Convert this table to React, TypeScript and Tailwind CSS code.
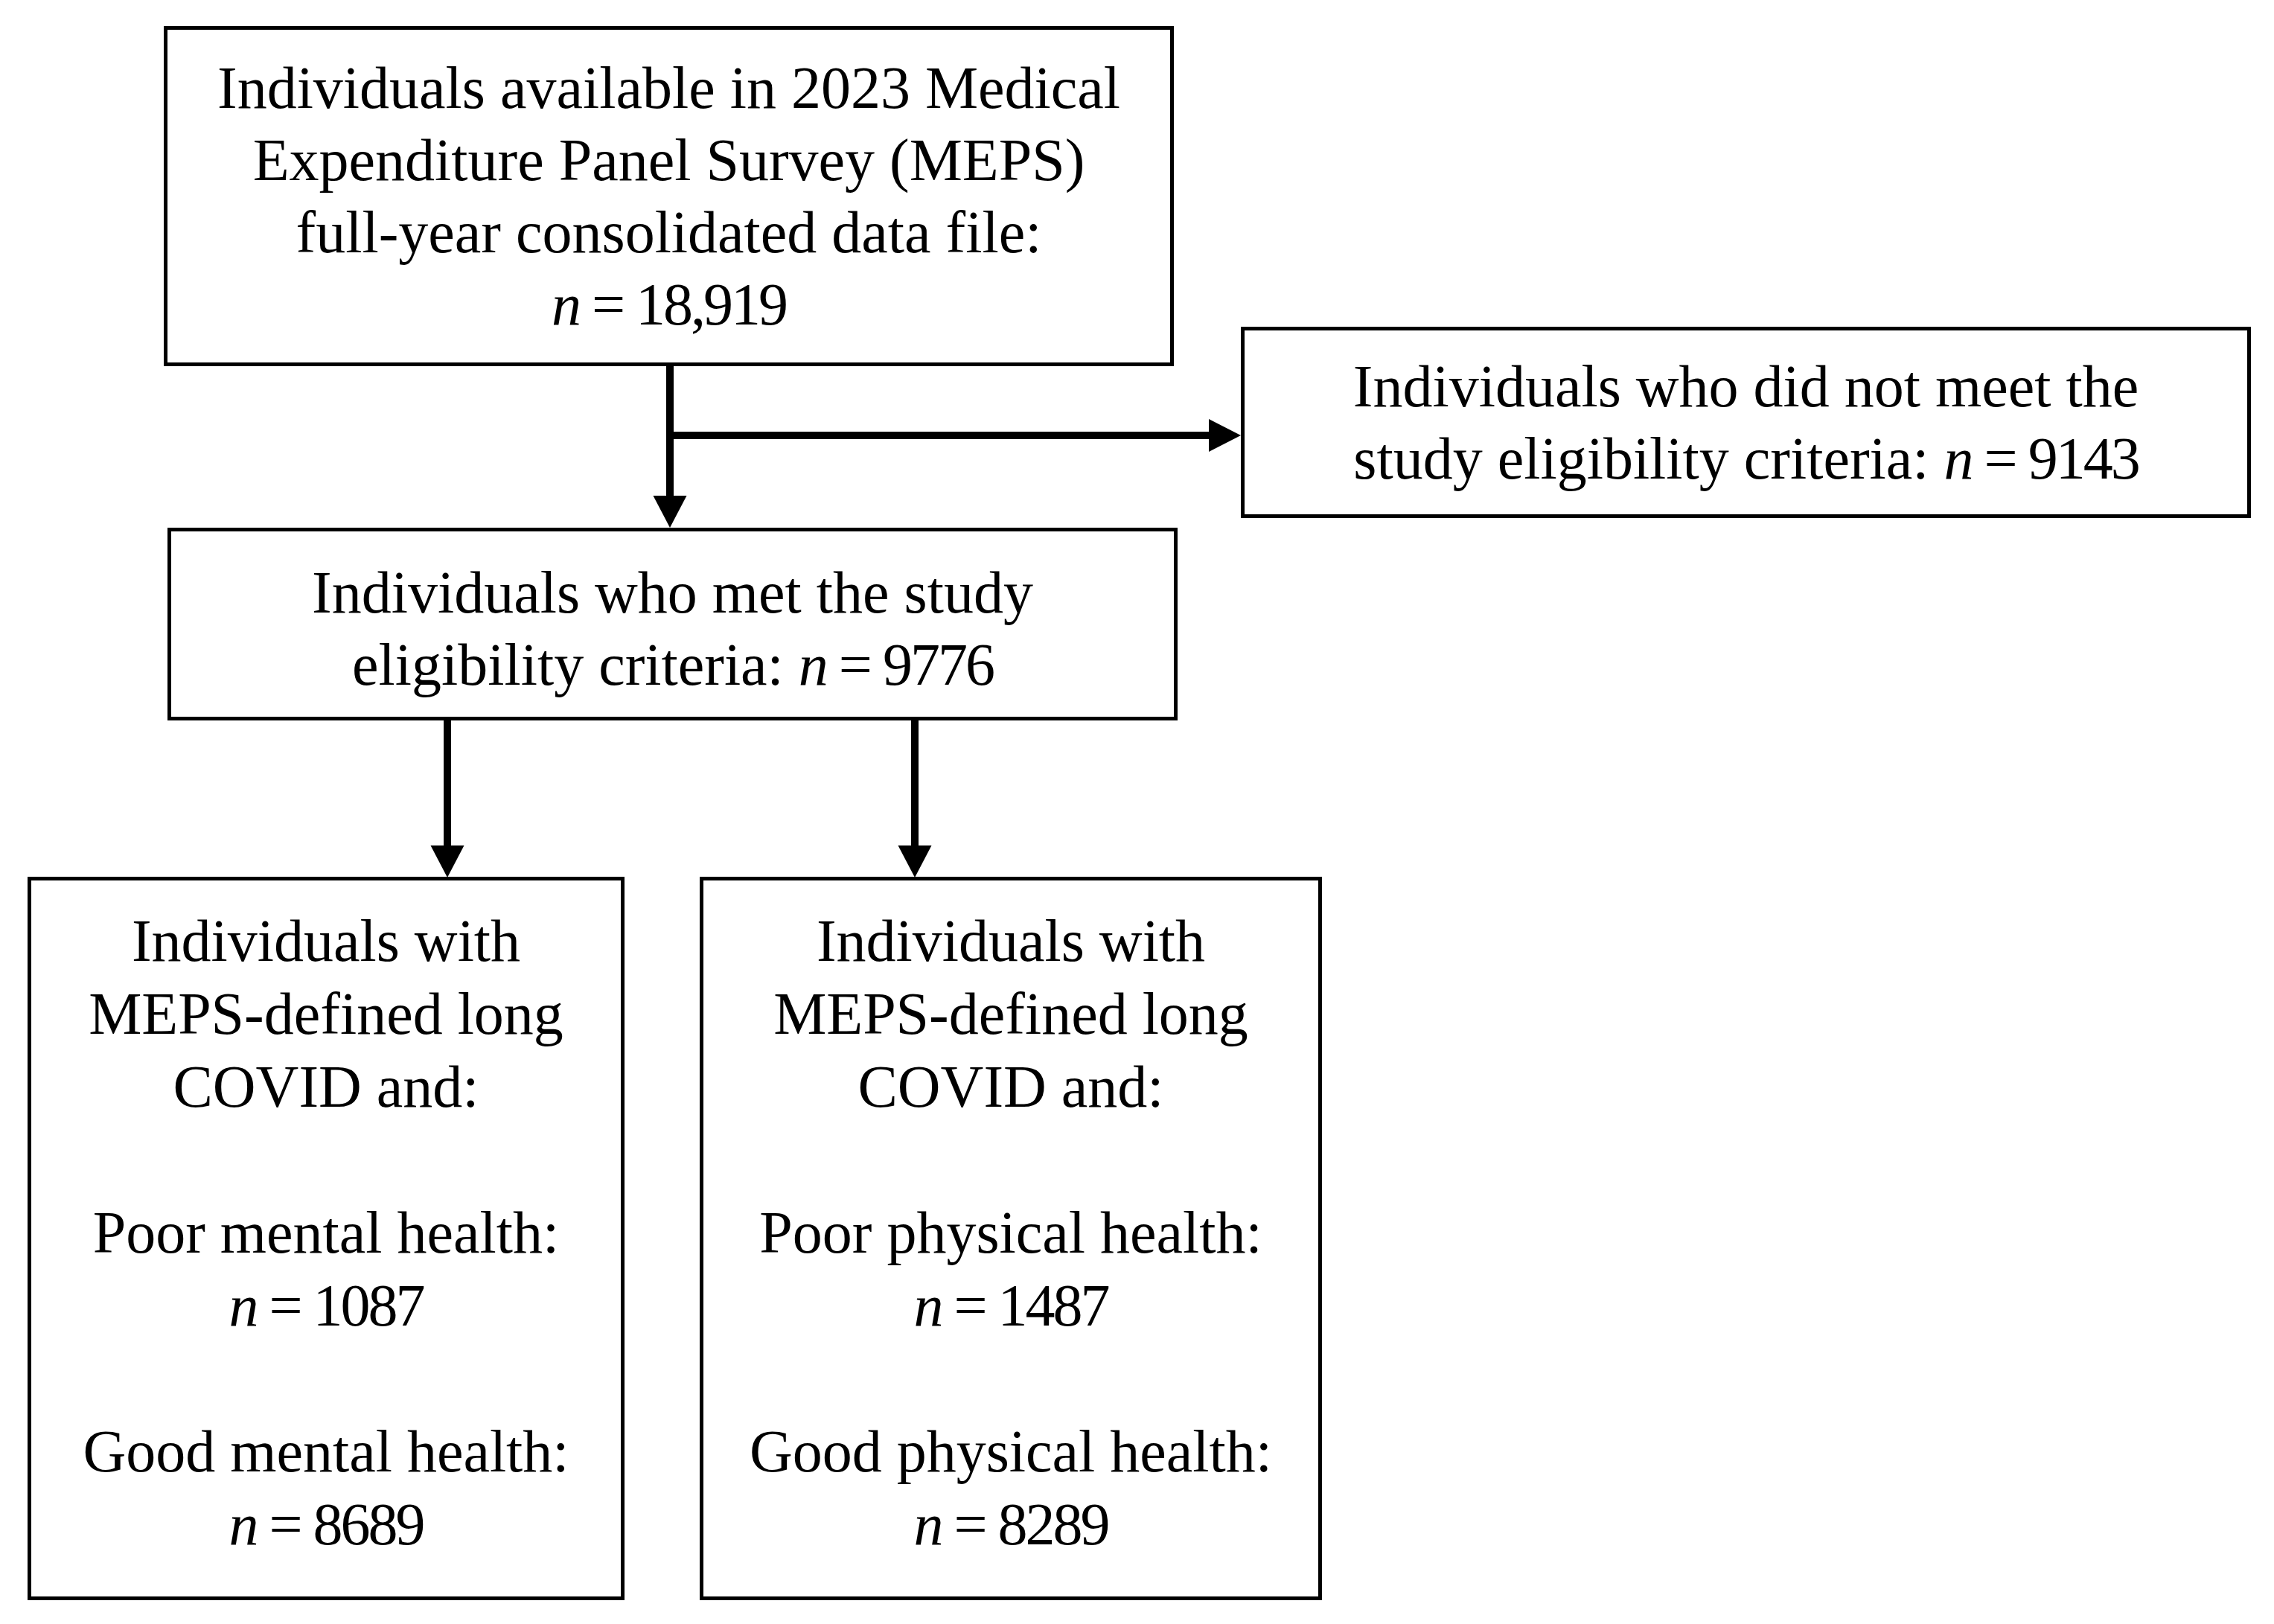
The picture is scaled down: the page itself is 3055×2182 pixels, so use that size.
import type { ReactNode } from 'react';

type BoxProps = {
  className: string;
  lines: ReactNode[];
  leading?: string;
};

function FlowBox({ className, lines, leading = 'leading-[97px]' }: BoxProps) {
  return (
    <div
      className={`absolute border-[5px] border-black bg-white flex flex-col items-center justify-center text-center ${leading} ${className}`}
    >
      {lines.map((line, i) => (
        <div key={i} className="whitespace-nowrap min-h-[1lh]">
          {line}
        </div>
      ))}
    </div>
  );
}

// italic n with its count, set a bit tighter like the figure's numerals
const Count = ({ value }: { value: string }) => (
  <span className="tracking-[-3px]">
    <i>n</i> = {value}
  </span>
);

export default function App() {
  return (
    <div className="relative w-[3055px] h-[2182px] bg-white text-black font-['Liberation_Serif',serif] text-[80px]">
      <FlowBox
        className="left-[220px] top-[35px] w-[1357px] h-[457px]"
        lines={[
          'Individuals available in 2023 Medical',
          'Expenditure Panel Survey (MEPS)',
          'full-year consolidated data file:',
          <Count value="18,919" />,
        ]}
      />

      <FlowBox
        className="left-[1667px] top-[439px] w-[1357px] h-[257px]"
        lines={[
          'Individuals who did not meet the',
          <>
            study eligibility criteria: <Count value="9143" />
          </>,
        ]}
      />

      <FlowBox
        className="left-[225px] top-[709px] w-[1357px] h-[259px] pt-[12px]"
        lines={[
          'Individuals who met the study',
          <>
            eligibility criteria: <Count value="9776" />
          </>,
        ]}
      />

      <FlowBox
        className="left-[37px] top-[1178px] w-[802px] h-[972px] pb-[16px]"
        leading="leading-[98px]"
        lines={[
          'Individuals with',
          'MEPS-defined long',
          'COVID and:',
          '',
          'Poor mental health:',
          <Count value="1087" />,
          '',
          'Good mental health:',
          <Count value="8689" />,
        ]}
      />

      <FlowBox
        className="left-[940px] top-[1178px] w-[836px] h-[972px] pb-[16px]"
        leading="leading-[98px]"
        lines={[
          'Individuals with',
          'MEPS-defined long',
          'COVID and:',
          '',
          'Poor physical health:',
          <Count value="1487" />,
          '',
          'Good physical health:',
          <Count value="8289" />,
        ]}
      />

      {/* connectors */}
      <svg
        className="absolute inset-0 pointer-events-none"
        width="3055"
        height="2182"
        viewBox="0 0 3055 2182"
      >
        <g stroke="black" strokeWidth="10" fill="none">
          <line x1="900" y1="492" x2="900" y2="670" />
          <line x1="895" y1="585" x2="1628" y2="585" />
          <line x1="601" y1="968" x2="601" y2="1140" />
          <line x1="1229" y1="968" x2="1229" y2="1140" />
        </g>
        <g fill="black">
          <polygon points="877.5,666 922.5,666 900,709" />
          <polygon points="1624,563 1624,607 1667,585" />
          <polygon points="578.5,1136 623.5,1136 601,1179" />
          <polygon points="1206.5,1136 1251.5,1136 1229,1179" />
        </g>
      </svg>
    </div>
  );
}
